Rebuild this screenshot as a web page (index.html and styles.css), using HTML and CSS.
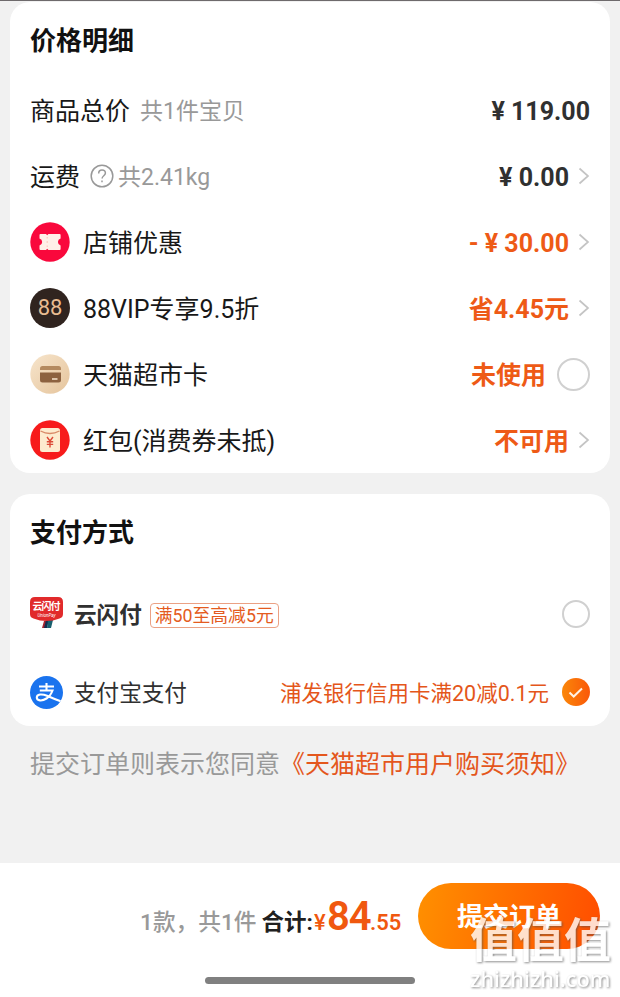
FILE: index.html
```html
<!DOCTYPE html>
<html lang="zh-CN">
<head>
<meta charset="utf-8">
<title>确认订单</title>
<link rel="stylesheet" href="styles.css">
</head>
<body>
<main class="page">
  <section class="card prices">
    <h2 class="card-title">价格明细</h2>
    <div class="row">
      <span class="label">商品总价</span><span class="note note-count">共1件宝贝</span>
      <span class="value dark">¥ 119.00</span>
    </div>
    <div class="row">
      <span class="label">运费</span>
      <svg class="help" viewBox="0 0 24 24"><circle cx="12" cy="12" r="10.8"/><path d="M8.7 9.4C8.7 7.3 10.1 6 12 6s3.4 1.2 3.4 3.1c0 2.6-3.3 2.8-3.3 5.4"/><path d="M12 16.6v1.6"/></svg>
      <span class="note">共2.41kg</span>
      <span class="value dark">¥ 0.00</span>
      <svg class="chevron" viewBox="0 0 12 18"><path d="M1.5 1.5L10 9l-8.500 7.500"/></svg>
    </div>
    <div class="row">
      <svg class="icon" viewBox="0 0 40 40"><circle cx="20" cy="20" r="19.700" fill="#f9083c"/><path d="M10.500 12h5.500l1.200 1.200L18.400 12h11.200q1 0 1 1v3.600a3.500 3.500 0 0 0 0 6.800V27q0 1-1 1H18.400l-1.200-1.200L16 28h-5.500q-1 0-1-1v-3.600a3.500 3.500 0 0 0 0-6.800V13q0-1 1-1z" fill="#fff0e8"/><path d="M17.200 15v1.500M17.200 19v2M17.200 23.500V25" stroke="#fbc6ba" stroke-width="1"/></svg>
      <span class="label">店铺优惠</span>
      <span class="value">- ¥ 30.00</span>
      <svg class="chevron" viewBox="0 0 12 18"><path d="M1.500 1.500L10 9l-8.500 7.500"/></svg>
    </div>
    <div class="row">
      <span class="icon vip">88</span>
      <span class="label">88VIP专享9.5折</span>
      <span class="value">省4.45元</span>
      <svg class="chevron" viewBox="0 0 12 18"><path d="M1.500 1.500L10 9l-8.500 7.500"/></svg>
    </div>
    <div class="row">
      <svg class="icon" viewBox="0 0 40 40"><defs><linearGradient id="cream" x2="1" y2="1"><stop stop-color="#f7e5cc"/><stop offset="1" stop-color="#e5c49c"/></linearGradient></defs><circle cx="20" cy="20" r="19.700" fill="url(#cream)"/><path d="M10 16v-1.500q0-2.500 2.500-2.500h16q2.500 0 2.500 2.500V16z" fill="#b48a60"/><path d="M10 18.500h21V26q0 2.500-2.500 2.500h-16Q10 28.500 10 26z" fill="#8d6240"/><path d="M22 25h5.500" stroke="#f3dfc6" stroke-width="1.600"/></svg>
      <span class="label">天猫超市卡</span>
      <span class="value">未使用</span>
      <span class="radio large"></span>
    </div>
    <div class="row">
      <svg class="icon" viewBox="0 0 40 40"><circle cx="20" cy="20" r="19.700" fill="#f71b1b"/><rect x="10" y="8" width="20" height="24" rx="2.500" fill="#fdebcf"/><path d="M10.500 11q9.500 5 19 0" fill="none" stroke="#d98a68" stroke-width="1.300"/><path d="M17 17l3 4 3-4M20 21v6.500M16.800 21.800h6.400M16.800 24.400h6.400" fill="none" stroke="#dc4a38" stroke-width="1.400"/></svg>
      <span class="label">红包(消费券未抵)</span>
      <span class="value">不可用</span>
      <svg class="chevron" viewBox="0 0 12 18"><path d="M1.500 1.500L10 9l-8.500 7.500"/></svg>
    </div>
  </section>

  <section class="card payment">
    <h2 class="card-title">支付方式</h2>
    <div class="pay-row first">
      <svg class="pay-icon" viewBox="0 0 33 33"><path d="M14 25h4l-2 7h-4z" fill="#a52430"/><path d="M16 24h3l-2 8h-3z" fill="#152e50"/><path d="M18 24h5l-2 8h-4z" fill="#19606f"/><path d="M5 1h23q5 0 5 5v12q0 3.500-3.500 4.500Q23 25 16.500 25T3.500 22.500Q0 21.500 0 18V6q0-5 5-5z" fill="#e12a2b"/><text x="16.500" y="14" textLength="28" class="logo-name">云闪付</text><text x="16.500" y="20.500" textLength="18" class="logo-sub">UnionPay</text></svg>
      <span class="pay-name strong">云闪付</span>
      <span class="coupon">满50至高减5元</span>
      <span class="radio"></span>
    </div>
    <div class="pay-row">
      <svg class="pay-icon" viewBox="0 0 33 33"><defs><clipPath id="disc"><circle cx="16.500" cy="16.500" r="16.500"/></clipPath></defs><g clip-path="url(#disc)"><rect width="33" height="33" fill="#1a73ee"/><path d="M9 10.500h15M16.500 7v7M9.800 14.500h12.700Q20.500 20 16.500 22.500C12 25.400 6.800 25 6.800 21.500S12 17.600 17 19.800Q24 23 34 26.500" fill="none" stroke="#fff" stroke-width="2.100"/></g></svg>
      <span class="pay-name">支付宝支付</span>
      <span class="promo">浦发银行信用卡满20减0.1元</span>
      <svg class="checked" viewBox="0 0 28 28"><defs><linearGradient id="orange"><stop stop-color="#fa8709"/><stop offset="1" stop-color="#fa5809"/></linearGradient></defs><circle cx="14" cy="14" r="14" fill="url(#orange)"/><path d="M7.500 14.500l4.200 4 8.300-8" fill="none" stroke="#fff2e4" stroke-width="2"/></svg>
    </div>
  </section>

  <p class="terms">提交订单则表示您同意<a class="terms-link">《天猫超市用户购买须知》</a></p>

  <footer class="bar">
    <div class="checkout">
      <div class="summary">
        <span class="count">1款，共1件</span>
        <span class="total">合计:</span>
        <span class="amount"><span class="yen">¥</span><span class="whole">84</span><span class="cents">.55</span></span>
      </div>
      <button class="submit">提交订单</button>
    </div>
    <div class="home-line"></div>
  </footer>
  <div class="watermark"><span class="mark-name">值值值</span><span class="mark-url">zhizhizhi.com</span></div>
</main>
</body>
</html>
```

FILE: styles.css
```css
* { box-sizing: border-box; }
body { margin: 0; background: #f1f1f1; font-family: Roboto, "Noto Sans CJK SC", sans-serif; color: #181818; }
.page { position: relative; width: 620px; height: 997px; overflow: hidden; display: flex; flex-direction: column; border-top: 1px solid #6e6a6c; white-space: nowrap; }
.card { margin: 0 10px; padding: 0 20px; background: #fff; border-radius: 20px; flex: none; }
.prices { margin-top: 1px; height: 471px; }
.card-title { margin: 0; height: 75px; padding-top: 1px; font-size: 26px; line-height: 76px; font-weight: 700; color: #111; }
.row { display: flex; align-items: center; height: 66px; }
.label, .note, .value { padding-top: 3px; line-height: 36px; }
.label { font-size: 25px; }
.note { font-size: 23px; color: #999; }
.note-count { margin-left: 10px; }
.help { width: 24px; height: 24px; margin: 0 4px 0 10px; fill: none; stroke: #999; stroke-width: 1.5; }
.value { margin-left: auto; font-size: 25px; font-weight: 700; color: #ee5a16; }
.dark { color: #303030; }
.chevron { width: 12px; height: 18px; margin-left: 9px; fill: none; stroke: #c4c4c4; stroke-width: 1.7; }
.icon { width: 40px; height: 40px; margin-right: 13px; flex: none; }
.vip { border-radius: 50%; background: #30241f; color: #e9bc91; font-size: 22px; line-height: 40px; text-align: center; }
.radio { width: 28px; height: 28px; margin-left: auto; border: 2px solid #d0d0d0; border-radius: 50%; }
.large { width: 33px; height: 33px; margin-left: 11px; }
.payment { margin-top: 21px; height: 232px; }
.pay-row { display: flex; align-items: center; height: 78px; }
.first { margin-top: 6px; }
.pay-icon { width: 33px; height: 33px; margin-right: 11px; flex: none; }
.first .pay-icon { margin-bottom: 4px; }
.pay-name { padding-top: 3px; font-size: 22.600px; line-height: 34px; color: #303030; }
.strong { font-weight: 700; }
.coupon { height: 25px; margin: 3px 0 0 8px; padding: 0 4px; border: 1px solid #eba184; border-radius: 4px; font-size: 17.800px; line-height: 24px; color: #e45b20; }
.promo { margin-left: auto; padding-top: 3px; font-size: 21.500px; line-height: 34px; color: #e4561a; }
.checked { width: 28px; height: 28px; margin-left: 13px; }
.logo-name { font-size: 10px; font-weight: 700; fill: #fff; text-anchor: middle; }
.logo-sub { font-size: 4.500px; fill: #fff; text-anchor: middle; font-style: italic; }
.terms { margin: 20px 30px 0; font-size: 25px; line-height: 38px; color: #999; }
.terms-link { color: #e4571d; }
.bar { margin-top: auto; height: 134px; background: #fff; flex: none; }
.checkout { display: flex; align-items: flex-start; height: 87px; padding: 20px 20px 0 140px; }
.summary { display: flex; align-items: baseline; padding-top: 10px; }
.count { font-size: 22.700px; color: #999; font-weight: 500; }
.total { margin-left: 5px; font-size: 22.500px; font-weight: 700; color: #202020; }
.amount { display: flex; align-items: baseline; color: #f0580f; font-weight: 700; }
.yen { width: 13px; margin-left: 1px; font-size: 22px; font-weight: 500; }
.whole { width: 43px; font-size: 40px; font-weight: 600; letter-spacing: -1px; }
.cents { font-size: 22px; font-weight: 600; }
.submit { width: 182px; height: 66px; margin-left: auto; padding: 3px 0 0; border: 0; border-radius: 33px; background: linear-gradient(100deg, #ff9000, #ff4d00); color: #fff; font: 700 26px/63px Roboto, "Noto Sans CJK SC", sans-serif; }
.home-line { width: 210px; height: 7px; margin: 27px auto 0; border-radius: 4px; background: #808080; }
.watermark { position: absolute; left: 470px; top: 914px; display: flex; flex-direction: column; color: #fff; opacity: .8; filter: drop-shadow(1px 1px 1px rgba(80, 80, 80, .8)); }
.mark-name { font-size: 47px; line-height: 52px; font-weight: 700; }
.mark-url { font: 500 21.800px/24px "Noto Sans", sans-serif; }
```
